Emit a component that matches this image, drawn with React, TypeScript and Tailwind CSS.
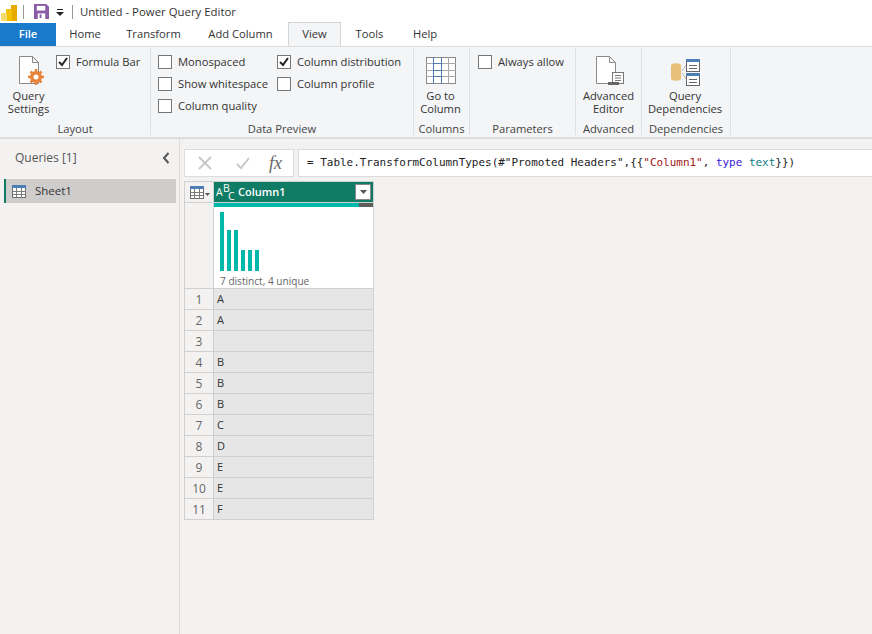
import { ReactNode } from "react";

const tabs = ["Home", "Transform", "Add Column"];
const tabWidths = ["w-[58px]", "w-[79px]", "w-[95px]"];
const rows = ["A", "A", "", "B", "B", "B", "C", "D", "E", "E", "F"];
const bars = [59, 41, 41, 21, 21, 21];

function Check({ checked, label }: { checked?: boolean; label: string }) {
  return (
    <div className="flex items-center h-[22px] whitespace-nowrap">
      <span className="w-[14px] h-[14px] border border-[#767676] bg-white flex items-center justify-center shrink-0">
        {checked && (
          <svg width="10" height="10" viewBox="0 0 10 10">
            <path d="M1 5l3 3 5-7" fill="none" stroke="#222" strokeWidth="2" />
          </svg>
        )}
      </span>
      <span className="ml-[6px]">{label}</span>
    </div>
  );
}

function Group({ label, width, children }: { label: string; width: string; children: ReactNode }) {
  return (
    <div className={`${width} h-[87px] flex flex-col border-r border-[#dfe0e2] shrink-0`}>
      <div className="flex-1 min-h-0">{children}</div>
      <div className="text-center leading-[16px] -mb-[2px] text-[#444]">{label}</div>
    </div>
  );
}

function BigButton({ icon, lines }: { icon: ReactNode; lines: string[] }) {
  return (
    <div className="flex flex-col items-center pt-[7px]">
      <div className="h-[33px] flex items-center justify-center">{icon}</div>
      <div className="text-center leading-[13px] mt-[1px]">
        {lines.map((l) => (
          <div key={l} className="whitespace-nowrap">{l}</div>
        ))}
      </div>
    </div>
  );
}

function DocIcon({ children, className }: { children?: ReactNode; className?: string }) {
  return (
    <svg width="30" height="33" viewBox="0 0 30 33" className={className}>
      <path d="M1.5 1.5h13l6 6v21h-19z M14.5 1.5v6h6" fill="#fff" stroke="#8a8a8a" />
      {children}
    </svg>
  );
}

function SheetIcon() {
  return (
    <svg width="16" height="13" viewBox="0 0 16 13">
      <rect x="0.5" y="0.5" width="13" height="12" fill="#fff" stroke="#6d6d6d" />
      <rect x="0" y="0" width="14" height="3" fill="#4d7db5" />
      <path d="M0 6.5h14M0 9.5h14M4.5 3v10M9.5 3v10" stroke="#7a7a7a" />
    </svg>
  );
}

export default function App() {
  return (
    <div
      className="w-[872px] h-[634px] overflow-hidden bg-[#f3f2f1] text-[11.2px] text-[#333]"
      style={{ fontFamily: '"Open Sans", sans-serif' }}
    >
      {/* title bar */}
      <div className="h-[23px] bg-white flex items-center">
        <svg width="16" height="19" viewBox="0 0 16 19" className="ml-px">
          <rect x="10" y="3" width="6" height="16" fill="#e8a900" />
          <rect x="5" y="7" width="6" height="12" fill="#f2c200" />
          <rect x="0" y="11" width="6" height="8" fill="#f7dc6b" />
        </svg>
        <span className="ml-[6px] w-px h-[14px] bg-[#999]" />
        <svg width="15" height="15" viewBox="0 0 16 16" className="ml-[10px]">
          <path d="M0 0h13l3 3v13H0z" fill="#8a5ca8" />
          <rect x="3" y="2" width="9" height="5" fill="#fff" />
          <rect x="4" y="10" width="8" height="6" fill="#fff" />
          <rect x="6" y="11" width="2" height="4" fill="#8a5ca8" />
        </svg>
        <svg width="8" height="8" viewBox="0 0 8 8" className="ml-[7px] mt-[3px]">
          <path d="M1 0h6v1H1zM0 3h8L4 7z" fill="#222" />
        </svg>
        <span className="ml-[8px] w-px h-[14px] bg-[#999]" />
        <span className="ml-[7px] text-[11.4px] text-[#333]">Untitled - Power Query Editor</span>
      </div>

      {/* tabs */}
      <div className="h-[23px] bg-white flex items-stretch relative">
        <div className="w-[56px] bg-[#1979ca] text-white flex items-center justify-center font-semibold">File</div>
        {tabs.map((t, i) => (
          <div key={t} className={`${tabWidths[i]} flex items-center justify-center`}>{t}</div>
        ))}
        <div className="w-[53px] h-[24px] -mt-px bg-[#f4f5f7] border border-b-0 border-[#d4d4d4] flex items-center justify-center z-10">View</div>
        <div className="w-[57px] flex items-center justify-center">Tools</div>
        <div className="w-[54px] flex items-center justify-center">Help</div>
      </div>

      {/* ribbon */}
      <div className="h-[93px] bg-[#f4f5f7] border-t border-b-2 border-[#dcdcdc] flex pt-[1px]">
        <Group label="Layout" width="w-[151px]">
          <div className="flex">
            <div className="w-[56px] flex justify-center pl-[1px]">
              <BigButton
                lines={["Query", "Settings"]}
                icon={
                  <DocIcon className="ml-[10px]">
                    <g transform="translate(18 22)">
                      <circle r="4.5" fill="none" stroke="#e8833a" strokeWidth="3" />
                      <path d="M0-8v16M-8 0h16M-5.5-5.5l11 11M5.5-5.5l-11 11" stroke="#e8833a" strokeWidth="2.5" />
                      <circle r="2.5" fill="#fff" />
                    </g>
                  </DocIcon>
                }
              />
            </div>
            <div className="pt-[3px]">
              <Check checked label="Formula Bar" />
            </div>
          </div>
        </Group>
        <Group label="Data Preview" width="w-[263px]">
          <div className="flex pl-[7px] pt-[3px]">
            <div className="w-[119px]">
              <Check label="Monospaced" />
              <Check label="Show whitespace" />
              <Check label="Column quality" />
            </div>
            <div>
              <Check checked label="Column distribution" />
              <Check label="Column profile" />
            </div>
          </div>
        </Group>
        <Group label="Columns" width="w-[56px]">
          <div className="flex justify-center pr-[2px]">
            <BigButton
              lines={["Go to", "Column"]}
              icon={
                <svg width="30" height="29" viewBox="0 0 30 29">
                  <rect x="0.5" y="0.5" width="29" height="26" fill="#fff" stroke="#8a8a8a" />
                  <path d="M0 6.5h30M0 13.5h30M0 19.5h30M22.5 0v26" stroke="#a8a8a8" />
                  <path d="M7.5 0v27M15.5 0v27M7 6.5h9M7 13.5h9M7 19.5h9" stroke="#4d7db5" />
                </svg>
              }
            />
          </div>
        </Group>
        <Group label="Parameters" width="w-[106px]">
          <div className="pl-[8px] pt-[3px]">
            <Check label="Always allow" />
          </div>
        </Group>
        <Group label="Advanced" width="w-[66px]">
          <div className="flex justify-center">
            <BigButton
              lines={["Advanced", "Editor"]}
              icon={
                <DocIcon className="ml-[4px]">
                  <rect x="17.5" y="17.5" width="11" height="11" fill="#fff" stroke="#777" />
                  <rect x="13" y="27" width="11" height="3" fill="#666" />
                  <path d="M20 20.5h6M20 23h6M20 25.5h6" stroke="#777" />
                </DocIcon>
              }
            />
          </div>
        </Group>
        <Group label="Dependencies" width="w-[89px]">
          <div className="flex justify-center pr-[2px]">
            <BigButton
              lines={["Query", "Dependencies"]}
              icon={
                <svg width="30" height="28" viewBox="0 0 30 28">
                  <path d="M1 7.5c0-3 10-3 10 0v13c0 3-10 3-10 0z" fill="#e8bf78" />
                  <path d="M12 13l5-7M12 15l5 7" stroke="#b8b8b8" fill="none" />
                  <rect x="16.5" y="1.5" width="13" height="12" fill="#fff" stroke="#666" />
                  <rect x="16" y="1" width="14" height="3" fill="#4d7db5" />
                  <path d="M19 7.5h8M19 10.5h8" stroke="#666" />
                  <rect x="16.5" y="15.5" width="13" height="12" fill="#fff" stroke="#666" />
                  <rect x="16" y="15" width="14" height="3" fill="#4d7db5" />
                  <path d="M19 21.5h8M19 24.5h8" stroke="#666" />
                </svg>
              }
            />
          </div>
        </Group>
      </div>

      {/* main */}
      <div className="flex h-[495px]">
        <div className="w-[180px] shrink-0 border-r border-[#dcdcdc] pt-[10px]">
          <div className="flex items-center justify-between h-[18px] pl-[15px] pr-[9px] text-[12px] text-[#555]">
            <span>Queries [1]</span>
            <svg width="8" height="12" viewBox="0 0 8 12">
              <path d="M6.5 1L2 6l4.5 5" fill="none" stroke="#555" strokeWidth="2" />
            </svg>
          </div>
          <div className="ml-[4px] mt-[12px] w-[172px] h-[24px] bg-[#cfcdcc] border-l-2 border-[#107c65] flex items-center pl-[6px] text-[11.5px] text-[#333]">
            <SheetIcon />
            <span className="ml-[7px]">Sheet1</span>
          </div>
        </div>

        <div className="flex-1 min-w-0 pl-[4px] pt-[10px]">
          <div className="flex h-[28px]">
            <div className="w-[110px] bg-white border border-[#dcdcdc] flex items-center shrink-0">
              <svg width="16" height="14" viewBox="0 0 16 14" className="ml-[12px]">
                <path d="M2 1l12 12M14 1L2 13" stroke="#c8c8c8" strokeWidth="2" />
              </svg>
              <svg width="16" height="14" viewBox="0 0 16 14" className="ml-[22px]">
                <path d="M2 8l4 4 8-10" fill="none" stroke="#c8c8c8" strokeWidth="2" />
              </svg>
              <span className="ml-[18px] text-[18px] italic text-[#666]" style={{ fontFamily: '"Liberation Serif", serif' }}>fx</span>
            </div>
            <div className="ml-[4px] flex-1 bg-white border border-r-0 border-[#dcdcdc] flex items-center pl-[8px] pt-[1px] text-[10.96px] whitespace-nowrap" style={{ fontFamily: '"DejaVu Sans Mono", monospace' }}>
              <span className="text-[#222]">= Table.TransformColumnTypes(#"Promoted Headers",{"{{"}</span>
              <span className="text-[#a31515]">"Column1"</span>
              <span className="text-[#222]">,&nbsp;</span>
              <span className="text-[#3a18d8]">type</span>
              <span>&nbsp;</span>
              <span className="text-[#0f7c80]">text</span>
              <span className="text-[#222]">{"}})"}</span>
            </div>
          </div>

          {/* table */}
          <div className="mt-[4px] w-[190px] border border-[#d0d0d0] bg-[#f3f2f1]">
            <div className="flex h-[21px] border-b border-[#d0d0d0]">
              <div className="w-[29px] border-r border-[#d0d0d0] flex items-center pl-[5px]">
                <SheetIcon />
                <svg width="5" height="3" viewBox="0 0 5 3" className="-ml-px mt-[4px]">
                  <path d="M0 0h5L2.5 3z" fill="#555" />
                </svg>
              </div>
              <div className="flex-1 bg-[#107c65] text-white flex items-center pl-[2px] relative">
                <span className="relative w-[20px] h-[21px] text-[10.5px] leading-none shrink-0">
                  <span className="absolute left-0 top-[5px]">A</span>
                  <span className="absolute left-[7px] top-[1px]">B</span>
                  <span className="absolute left-[12px] top-[9px]">C</span>
                </span>
                <span className="ml-[2px] font-semibold text-[11px]">Column1</span>
                <span className="absolute right-[2px] top-[2px] w-[16px] h-[16px] bg-white border border-[#888] flex items-center justify-center">
                  <svg width="7" height="4" viewBox="0 0 7 4">
                    <path d="M0 0h7L3.5 4z" fill="#555" />
                  </svg>
                </span>
              </div>
            </div>
            <div className="flex h-[86px] border-b border-[#d0d0d0]">
              <div className="w-[29px] border-r border-[#d0d0d0]" />
              <div className="flex-1 bg-white flex flex-col">
                <div className="flex h-[4px] shrink-0">
                  <div className="w-[145px] bg-[#01b8aa]" />
                  <div className="flex-1 bg-[#605e5c]" />
                </div>
                <div className="h-[64px] flex items-end gap-[3px] pl-[6px] shrink-0">
                  {bars.map((h, i) => (
                    <div key={i} className="w-[4px] bg-[#01b8aa]" style={{ height: h }} />
                  ))}
                </div>
                <div className="pl-[6px] pt-[2px] text-[10.1px] leading-[16px] text-[#666] whitespace-nowrap">7 distinct, 4 unique</div>
              </div>
            </div>
            {rows.map((v, i) => (
              <div key={i} className="flex h-[21px] border-b border-[#d0d0d0] last:border-b-0 last:h-[20px]">
                <div className="w-[29px] border-r border-[#d0d0d0] flex items-center justify-center pt-[1px] text-[12px] text-[#666]">{i + 1}</div>
                <div className="flex-1 bg-[#e6e6e6] flex items-center pl-[3px] pt-[1px] text-[11px] text-[#333]">{v}</div>
              </div>
            ))}
          </div>
        </div>
      </div>
    </div>
  );
}
